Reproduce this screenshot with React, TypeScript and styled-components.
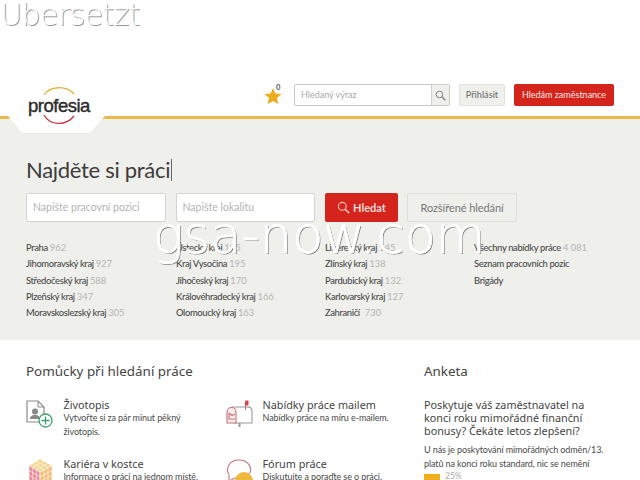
import styled, { createGlobalStyle } from "styled-components";

const GlobalStyle = createGlobalStyle`
  html, body {
    margin: 0;
    padding: 0;
    width: 640px;
    height: 480px;
    overflow: hidden;
    background: #fff;
  }
  * { box-sizing: border-box; }
`;

const Page = styled.div`
  position: relative;
  width: 640px;
  height: 480px;
  overflow: hidden;
  font-family: "Lato", "Noto Sans", sans-serif;
  color: #444;
`;

const WatermarkTop = styled.div`
  position: absolute;
  left: 0;
  top: -3px;
  font-family: "DejaVu Sans", sans-serif;
  font-weight: 200;
  font-size: 30px;
  line-height: 36px;
  letter-spacing: -0.6px;
  color: #fff;
  text-shadow: 1px 1px 0 #999;
  white-space: nowrap;
`;

const WatermarkCenter = styled.div`
  position: absolute;
  left: 153px;
  top: 206px;
  font-family: "DejaVu Sans", sans-serif;
  font-weight: 200;
  font-size: 51px;
  line-height: 60px;
  color: #fff;
  -webkit-text-stroke: 0.8px #fff;
  text-shadow: 1px 1px 0 #777;
  white-space: nowrap;
`;

const Header = styled.header`
  position: relative;
  height: 119px;
  padding: 84px 26px 0 0;
  border-bottom: 3px solid #e9b949;
  display: flex;
  justify-content: flex-end;
  align-items: flex-start;
`;

const LogoTab = styled.div`
  position: absolute;
  left: 8px;
  top: 84px;
  width: 98px;
  height: 50px;
  z-index: 1;
`;

const LogoText = styled.span`
  position: absolute;
  left: 20px;
  top: 11px;
  font-family: "Liberation Sans", sans-serif;
  font-weight: 400;
  font-size: 18.5px;
  line-height: 22px;
  letter-spacing: -0.5px;
  color: #2b2b2b;
  -webkit-text-stroke: 0.4px #2b2b2b;
`;

const StarWrap = styled.div`
  position: relative;
  width: 18px;
  height: 18px;
  margin: 3px 12px 0 0;
`;

const StarCount = styled.span`
  position: absolute;
  left: 12px;
  top: -3px;
  font-size: 7.5px;
  font-weight: 700;
  line-height: 8px;
  color: #555;
`;

const SearchBox = styled.div`
  display: flex;
  width: 156px;
  height: 22px;
  border: 1px solid #c9c9c5;
  border-radius: 2px;
  background: #fff;
  margin-right: 9px;
`;

const SearchPlaceholder = styled.span`
  flex: 1;
  padding-left: 6px;
  font-size: 9px;
  line-height: 20px;
  color: #aaa;
`;

const SearchButton = styled.span`
  width: 18px;
  background: #efefec;
  border-left: 1px solid #d0d0cc;
  display: flex;
  align-items: center;
  justify-content: center;
`;

const LoginButton = styled.span`
  width: 46px;
  height: 22px;
  margin-right: 9px;
  background: #efefec;
  border: 1px solid #e2e2de;
  border-radius: 2px;
  font-size: 9.2px;
  line-height: 20px;
  text-align: center;
  color: #666;
`;

const EmployerButton = styled.span`
  width: 100px;
  height: 22px;
  background: #d4241c;
  border-radius: 2px;
  font-size: 9px;
  line-height: 22px;
  text-align: center;
  color: #fbe9e6;
  white-space: nowrap;
`;

const Hero = styled.section`
  height: 221px;
  padding: 36px 26px 0;
  background: #efefec;
`;

const HeroTitle = styled.h1`
  margin: 0;
  height: 38px;
  font-size: 22px;
  font-weight: 400;
  line-height: 30px;
  letter-spacing: -0.3px;
  color: #3c3c3c;
  display: flex;
  align-items: flex-start;
`;

const Caret = styled.i`
  display: block;
  width: 1px;
  height: 22px;
  margin: 4px 0 0 1px;
  background: #666;
`;

const SearchRow = styled.div`
  display: flex;
  height: 29px;
`;

const Field = styled.div`
  width: 139.5px;
  height: 29px;
  margin-right: 10px;
  padding-left: 6px;
  background: #fff;
  border: 1px solid #d3d3cf;
  border-radius: 2px;
  font-size: 10.5px;
  line-height: 27px;
  color: #b4b4b4;
`;

const PrimaryButton = styled.div`
  width: 73px;
  height: 29px;
  margin-right: 9px;
  background: #d4241c;
  border-radius: 2px;
  display: flex;
  align-items: center;
  justify-content: center;
  gap: 3px;
  font-size: 11px;
  font-weight: 700;
  color: #f6dcd8;
`;

const SecondaryButton = styled.div`
  width: 110px;
  height: 29px;
  background: #efefec;
  border: 1px solid #dededa;
  border-radius: 2px;
  font-size: 11px;
  line-height: 27px;
  letter-spacing: -0.1px;
  text-align: center;
  color: #777;
`;

const Regions = styled.div`
  display: grid;
  grid-template-columns: 150px 149px 149px 1fr;
  margin-top: 18px;
`;

const RegionColumn = styled.ul`
  margin: 0;
  padding: 0;
  list-style: none;
`;

const RegionItem = styled.li`
  height: 16.3px;
  font-size: 9.4px;
  font-weight: 500;
  line-height: 16.3px;
  letter-spacing: -0.35px;
  color: #4a4a4a;
  white-space: nowrap;
`;

const RegionCount = styled.span<{ $gap?: boolean }>`
  margin-left: ${(props) => (props.$gap ? "5px" : "2px")};
  font-weight: 400;
  letter-spacing: 0;
  color: #b5b5b2;
`;

const Lower = styled.section`
  display: grid;
  grid-template-columns: 398px 1fr;
  padding: 21px 0 0 26px;
`;

const SectionTitle = styled.h2`
  margin: 0 0 15px;
  font-family: "Noto Sans", sans-serif;
  font-size: 13.4px;
  font-weight: 400;
  line-height: 20px;
  color: #444;
`;

const Tools = styled.div`
  display: grid;
  grid-template-columns: 199px 175px;
  row-gap: 16px;
`;

const Tool = styled.div`
  display: flex;
  min-height: 43px;
`;

const ToolIcon = styled.div`
  width: 37px;
  flex: none;
  padding-top: 4px;
`;

const ToolBody = styled.div`
  flex: 1;
  padding: 2px 0 0 0.5px;
`;

const ToolTitle = styled.div`
  font-family: "Noto Sans", sans-serif;
  font-size: 10.8px;
  line-height: 13px;
  color: #444;
`;

const ToolText = styled.div`
  max-width: 140px;
  font-size: 9px;
  line-height: 14px;
  letter-spacing: -0.1px;
  color: #4a4a4a;
`;

const Poll = styled.div`
  width: 200px;
`;

const PollQuestion = styled.div`
  width: 175px;
  padding-top: 2px;
  margin-bottom: 6px;
  font-family: "Noto Sans", sans-serif;
  font-size: 10.8px;
  line-height: 13px;
  color: #444;
`;

const PollAnswer = styled.div`
  font-size: 9px;
  line-height: 14px;
  letter-spacing: -0.1px;
  color: #4a4a4a;
`;

const PollResult = styled.div`
  display: flex;
  align-items: flex-start;
  gap: 5px;
  font-size: 8.5px;
  line-height: 10px;
  color: #aaa;
`;

const PollBar = styled.div<{ $width: number }>`
  width: ${(props) => props.$width}px;
  height: 10px;
  margin-top: 3px;
  background: #eeae1e;
`;

const regions = [
  [["Praha", "962"], ["Jihomoravský kraj", "927"], ["Středočeský kraj", "588"], ["Plzeňský kraj", "347"], ["Moravskoslezský kraj", "305"]],
  [["Ústecký kraj", "195"], ["Kraj Vysočina", "195"], ["Jihočeský kraj", "170"], ["Královéhradecký kraj", "166"], ["Olomoucký kraj", "163"]],
  [["Liberecký kraj", "145"], ["Zlínský kraj", "138"], ["Pardubický kraj", "132"], ["Karlovarský kraj", "127"], ["Zahraničí", "730"]],
  [["Všechny nabídky práce", "4 081"], ["Seznam pracovních pozic", ""], ["Brigády", ""]],
];

function SearchGlyph({ size, color }: { size: number; color: string }) {
  return (
    <svg width={size} height={size} viewBox="0 0 16 16" fill="none" stroke={color} strokeWidth="1.3">
      <circle cx="6.5" cy="6.5" r="4.8" />
      <path d="M10 10l5 5" strokeWidth="1.8" />
    </svg>
  );
}

function CvIcon() {
  return (
    <svg width="28" height="29" viewBox="0 0 28 29" fill="none">
      <path d="M1 1h11l6 6v15H1z" fill="#fff" stroke="#8a8a8a" strokeWidth="1.2" />
      <path d="M12 1v6h6" stroke="#8a8a8a" />
      <circle cx="9" cy="11.5" r="3" fill="#888" />
      <path d="M4 19c0-3 2-4 5-4s5 1 5 4z" fill="#888" />
      <circle cx="19.5" cy="20.5" r="6.5" fill="#fff" stroke="#3fa06f" strokeWidth="1.3" />
      <path d="M19.5 16.5v8M15.5 20.5h8" stroke="#3fa06f" strokeWidth="1.3" />
    </svg>
  );
}

function MailboxIcon() {
  return (
    <svg width="29" height="28" viewBox="0 0 29 28" fill="none" strokeWidth="1.1">
      <path d="M7 7h15a4 4 0 0 1 5 4v12H9" fill="#fff" stroke="#9a9a9a" />
      <path d="M2 12a4.500 4.500 0 0 1 9 0v11H2z" fill="#fbeeee" stroke="#c9747a" />
      <path d="M4 13l3 2.500 3-1.500M4 13v6h6" stroke="#c9747a" />
      <path d="M20.500 10V2" stroke="#c9747a" />
      <rect x="20" y="0.500" width="3.500" height="5" rx="1" fill="#d8414d" />
      <rect x="13.500" y="23" width="2" height="4" fill="#999" />
    </svg>
  );
}

function CubeIcon() {
  return (
    <svg width="27" height="28" viewBox="0 0 27 28" stroke="#fff" strokeWidth="0.6">
      <path d="M14 0L26 6.500 14 13 3 6.500z" fill="#f5d68f" />
      <path d="M3 6.500L14 13v15L3 21z" fill="#ec8a96" />
      <path d="M26 6.500L14 13v15l12-7z" fill="#f6bd7a" />
      <path d="M6.700 8.700v14.500M10.300 10.800v14.500M18 10.800v14.500M22 8.700v14.500M3 11.500l11 6.500 12-6.500M3 16.200l11 6.500 12-6.500M6.700 4.300l11 6.500M10.300 2.200l11.700 6.500M22 4.300L10.300 10.800M18 2.200L6.700 8.700" fill="none" />
    </svg>
  );
}

function ForumIcon() {
  return (
    <svg width="29" height="28" viewBox="0 0 29 28" fill="none">
      <path d="M4 15.500C0 10 4 1 14 1s14 9 10 14-9 5-14 4l-6 3z" fill="#fff" stroke="#c9747a" strokeWidth="1.1" />
      <circle cx="19" cy="22" r="9" fill="#eeb93a" />
    </svg>
  );
}

export default function App() {
  return (
    <Page>
      <GlobalStyle />
      <Header>
        <LogoTab>
          <svg width="98" height="50" viewBox="0 0 98 50">
            <path d="M0 33h1l10 13q2 3 6 3h62q4 0 6-3l10-13h3" fill="#fff" stroke="#d9d9d6" strokeWidth="0.8" />
            <path d="M2 0h94v33l-11 13q-2 3-6 3H17q-4 0-6-3L1 33z" fill="#fff" />
            <path d="M36 11C42 2 58 1 66 10" fill="none" stroke="#e3b340" strokeWidth="1.3" />
            <path d="M36 31C42 42 58 42 66 32" fill="none" stroke="#c8333b" strokeWidth="1.3" />
          </svg>
          <LogoText>profesia</LogoText>
        </LogoTab>
        <StarWrap>
          <svg width="18" height="18" viewBox="0 0 18 18">
            <path d="M9 1l2.400 5.600 6.100.5-4.600 4 1.400 6L9 14l-5.300 3.100 1.400-6-4.600-4 6.100-.5z" fill="#edac1c" />
          </svg>
          <StarCount>0</StarCount>
        </StarWrap>
        <SearchBox>
          <SearchPlaceholder>Hledaný výraz</SearchPlaceholder>
          <SearchButton>
            <SearchGlyph size={11} color="#777" />
          </SearchButton>
        </SearchBox>
        <LoginButton>Přihlásit</LoginButton>
        <EmployerButton>Hledám zaměstnance</EmployerButton>
      </Header>
      <Hero>
        <HeroTitle>
          Najděte si práci
          <Caret />
        </HeroTitle>
        <SearchRow>
          <Field>Napište pracovní pozici</Field>
          <Field>Napište lokalitu</Field>
          <PrimaryButton>
            <SearchGlyph size={13} color="#f6c9c4" />
            Hledat
          </PrimaryButton>
          <SecondaryButton>Rozšířené hledání</SecondaryButton>
        </SearchRow>
        <Regions>
          {regions.map((column, index) => (
            <RegionColumn key={index}>
              {column.map(([name, count]) => (
                <RegionItem key={name}>
                  {name}
                  {count && <RegionCount $gap={name === "Zahraničí"}>{count}</RegionCount>}
                </RegionItem>
              ))}
            </RegionColumn>
          ))}
        </Regions>
      </Hero>
      <Lower>
        <div>
          <SectionTitle>Pomůcky při hledání práce</SectionTitle>
          <Tools>
            <Tool>
              <ToolIcon><CvIcon /></ToolIcon>
              <ToolBody>
                <ToolTitle>Životopis</ToolTitle>
                <ToolText>Vytvořte si za pár minut pěkný životopis.</ToolText>
              </ToolBody>
            </Tool>
            <Tool>
              <ToolIcon><MailboxIcon /></ToolIcon>
              <ToolBody>
                <ToolTitle>Nabídky práce mailem</ToolTitle>
                <ToolText>Nabídky práce na míru e-mailem.</ToolText>
              </ToolBody>
            </Tool>
            <Tool>
              <ToolIcon><CubeIcon /></ToolIcon>
              <ToolBody>
                <ToolTitle>Kariéra v kostce</ToolTitle>
                <ToolText>Informace o práci na jednom místě.</ToolText>
              </ToolBody>
            </Tool>
            <Tool>
              <ToolIcon><ForumIcon /></ToolIcon>
              <ToolBody>
                <ToolTitle>Fórum práce</ToolTitle>
                <ToolText>Diskutujte a poraďte se o práci.</ToolText>
              </ToolBody>
            </Tool>
          </Tools>
        </div>
        <Poll>
          <SectionTitle>Anketa</SectionTitle>
          <PollQuestion>Poskytuje váš zaměstnavatel na konci roku mimořádné finanční bonusy? Čekáte letos zlepšení?</PollQuestion>
          <PollAnswer>U nás je poskytování mimořádných odměn/13. platů na konci roku standard, nic se nemění</PollAnswer>
          <PollResult>
            <PollBar $width={16} />
            25%
          </PollResult>
        </Poll>
      </Lower>
      <WatermarkTop>Ubersetzt</WatermarkTop>
      <WatermarkCenter>gsa-now.com</WatermarkCenter>
    </Page>
  );
}
